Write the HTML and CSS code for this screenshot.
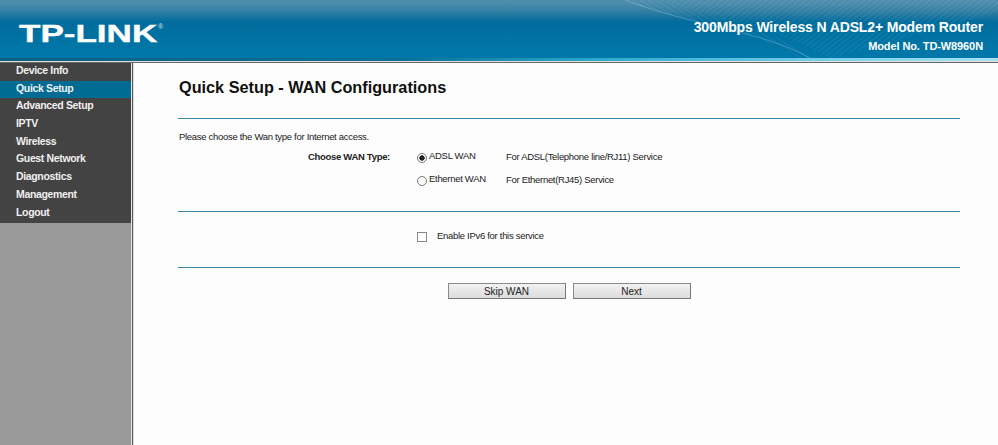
FILE: index.html
```html
<!DOCTYPE html>
<html lang="en">
<head>
<meta charset="utf-8">
<title>Quick Setup - WAN Configurations</title>
<link rel="stylesheet" href="styles.css">
</head>
<body>
<header class="banner">
  <svg class="swoosh" viewBox="0 0 998 58" preserveAspectRatio="none" aria-hidden="true">
    <defs>
      <pattern id="hatch" width="4" height="4" patternUnits="userSpaceOnUse" patternTransform="rotate(-38)">
        <line x1="0" y1="0" x2="4" y2="0" stroke="#ffffff" stroke-opacity=".16" stroke-width="1"/>
      </pattern>
      <pattern id="hatch2" width="4" height="4" patternUnits="userSpaceOnUse" patternTransform="rotate(32)">
        <line x1="0" y1="0" x2="4" y2="0" stroke="#ffffff" stroke-opacity=".13" stroke-width="1"/>
      </pattern>
    </defs>
    <path d="M625 0 C690 24 760 32 800 58 L812 58 C780 30 700 14 660 0 Z" fill="url(#hatch2)"/>
    <path d="M660 0 C730 22 790 34 830 58 C900 40 960 22 998 12 L998 0 Z" fill="url(#hatch)"/>
    <path d="M625 0 C700 28 760 30 810 58" fill="none" stroke="#ffffff" stroke-opacity=".22"/>
  </svg>
  <div class="logo"><span class="logo-text">TP-LINK</span><span class="logo-mark">®</span></div>
  <div class="product">
    <div class="product-name">300Mbps Wireless N ADSL2+ Modem Router</div>
    <div class="product-model">Model No. TD-W8960N</div>
  </div>
</header>
<div class="rule-top"></div>
<div class="layout">
  <nav class="sidebar">
    <ul class="menu">
      <li class="menu-item">Device Info</li>
      <li class="menu-item active">Quick Setup</li>
      <li class="menu-item">Advanced Setup</li>
      <li class="menu-item">IPTV</li>
      <li class="menu-item">Wireless</li>
      <li class="menu-item">Guest Network</li>
      <li class="menu-item">Diagnostics</li>
      <li class="menu-item">Management</li>
      <li class="menu-item">Logout</li>
    </ul>
  </nav>
  <div class="divider"></div>
  <main class="content">
    <h1 class="title">Quick Setup - WAN Configurations</h1>
    <hr class="line">
    <p class="intro">Please choose the Wan type for Internet access.</p>
    <div class="wan-grid">
      <div class="wan-label">Choose WAN Type:</div>
      <div class="wan-option"><span class="radio checked"></span><span class="wan-name">ADSL WAN</span></div>
      <div class="wan-desc">For ADSL(Telephone line/RJ11) Service</div>
      <div></div>
      <div class="wan-option"><span class="radio"></span><span class="wan-name">Ethernet WAN</span></div>
      <div class="wan-desc">For Ethernet(RJ45) Service</div>
    </div>
    <hr class="line line-b">
    <div class="ipv6"><span class="check"></span><span>Enable IPv6 for this service</span></div>
    <hr class="line line-c">
    <div class="actions">
      <button class="btn" type="button">Skip WAN</button>
      <button class="btn" type="button">Next</button>
    </div>
  </main>
</div>
</body>
</html>
```
FILE: styles.css
```css
* { box-sizing: border-box; }
html, body { height: 100%; }
body {
  margin: 0;
  width: 998px;
  height: 445px;
  overflow: hidden;
  background: #fdfdfd;
  font-family: "Liberation Sans", Arial, sans-serif;
  font-size: 9.5px;
  letter-spacing: -.3px;
  color: #222;
  display: flex;
  flex-direction: column;
}
.banner {
  position: relative;
  height: 58px;
  flex: none;
  background: linear-gradient(180deg, #4f8fae 0, #4a8bab 4px, #2f7ea3 12px, #006c9c 22px, #0073a4 40px, #0078a9 58px);
  display: flex;
  justify-content: space-between;
  overflow: hidden;
}
.swoosh { position: absolute; inset: 0; width: 100%; height: 100%; }
.logo {
  position: relative;
  padding: 20px 0 0 19px;
  color: #fff;
  display: flex;
  align-items: flex-start;
  letter-spacing: 0;
}
.logo-text {
  display: block;
  font-weight: 700;
  font-size: 24px;
  line-height: 27px;
  width: 95px;
  transform: scaleX(1.46);
  transform-origin: left center;
  -webkit-text-stroke: .4px #fff;
}
.logo-mark {
  font-size: 7px;
  line-height: 7px;
  margin: 3px 0 0 44px;
  color: #d8e8f0;
}
.product {
  position: relative;
  padding: 18px 15px 0 0;
  text-align: right;
  color: #fff;
  font-weight: 700;
  letter-spacing: 0;
}
.product-name { font-size: 14px; letter-spacing: -.14px; line-height: 18px; }
.product-model { font-size: 11px; letter-spacing: -.1px; line-height: 12px; margin-top: 4px; }
.rule-top {
  height: 5px;
  flex: none;
  background:
    linear-gradient(90deg, #0a5f80 0, #0a6f96 40%, #2da9d0 60%, #7fd2ea 85%, #a8e2f2 100%) top / 100% 3px no-repeat,
    linear-gradient(180deg, transparent 3px, #e0e0e0 3px, #e0e0e0 4px, #666 4px);
}
.layout { flex: 1; display: flex; min-height: 0; }
.sidebar { width: 131px; flex: none; background: #999; }
.menu {
  list-style: none;
  margin: 0;
  padding: 0 0 1px;
  background: #434343;
}
.menu-item {
  height: 17.7px;
  line-height: 14px;
  padding: 0 0 0 16px;
  color: #f0f0f0;
  font-weight: 700;
  font-size: 10.5px;
  letter-spacing: -.35px;
}
.active { background: #006c94; }
.divider {
  width: 3px;
  flex: none;
  background: linear-gradient(90deg, #e8e8e8 0, #e8e8e8 1px, #555 1px, #555 2px, #ddd 2px);
}
.content { flex: 1; padding: 0 38px 0 44px; }
.title {
  margin: 14px 0 0 1px;
  font-size: 16.25px;
  letter-spacing: 0;
  line-height: 20px;
  font-weight: 700;
  color: #111;
}
.line { border: 0; height: 1px; margin: 21px 0 0; background: #3d87a8; }
.intro { margin: 12px 0 0 1px; line-height: 11px; }
.wan-grid {
  display: grid;
  grid-template-columns: 211px 116px 1fr;
  grid-auto-rows: 23px;
  margin: 3px 0 0 1px;
  align-items: center;
}
.wan-label { font-weight: 700; text-align: right; }
.wan-option { display: flex; align-items: center; gap: 2px; padding-left: 27px; white-space: nowrap; }
.wan-name { margin-bottom: 2px; }
.radio {
  width: 10px;
  height: 10px;
  border: 1px solid #777;
  border-radius: 50%;
  background: #fff;
  flex: none;
  position: relative;
  top: 1px;
}
.radio.checked { background: radial-gradient(circle, #222 0, #222 2.4px, #fff 3px); }
.line-b { margin-top: 20px; }
.ipv6 {
  display: flex;
  align-items: center;
  gap: 10px;
  margin: 17px 0 0 239px;
  height: 13px;
}
.check {
  width: 10px;
  height: 10px;
  border: 1px solid #888;
  background: #fff;
  position: relative;
  top: 1px;
}
.line-c { margin-top: 25px; }
.actions {
  display: flex;
  gap: 7px;
  margin: 15px 0 0 269.5px;
}
.btn {
  width: 118px;
  height: 16px;
  padding: 0;
  font: 10px "Liberation Sans", Arial, sans-serif;
  letter-spacing: 0;
  color: #222;
  background: linear-gradient(180deg, #f2f2f2, #dcdcdc);
  border: 1px solid #8a8a8a;
  border-bottom-color: #777;
  border-right-color: #777;
}
```
